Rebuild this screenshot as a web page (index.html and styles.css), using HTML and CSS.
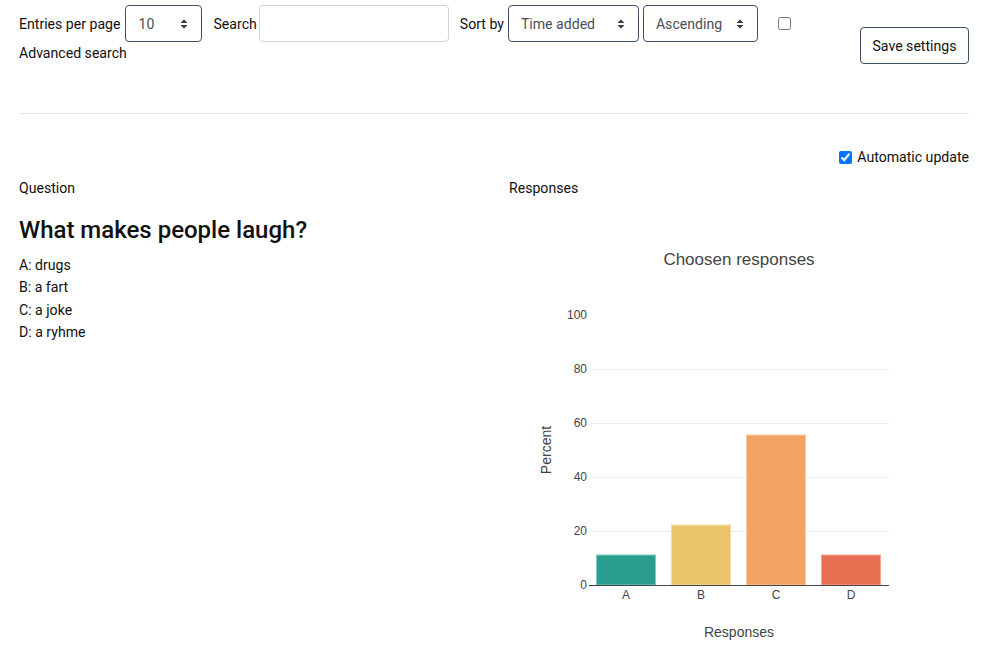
FILE: index.html
```html
<!DOCTYPE html>
<html lang="en">
<head>
<meta charset="utf-8">
<title>Responses</title>
<link rel="stylesheet" href="styles.css">
</head>
<body>
<div class="page">
  <form class="toolbar">
    <div class="controls">
      <label class="field field-entries">Entries per page
        <span class="select select-entries">10<svg class="chev" width="8" height="10" viewBox="0 0 8 10"><path d="M0.5 4 L4 0.5 L7.5 4 Z M0.5 6 L4 9.5 L7.5 6 Z" fill="#343a40"/></svg></span>
      </label>
      <label class="field field-search">Search
        <span class="input-search"></span>
      </label>
      <label class="field">Sort by
        <span class="select select-sort">Time added<svg class="chev" width="8" height="10" viewBox="0 0 8 10"><path d="M0.5 4 L4 0.5 L7.5 4 Z M0.5 6 L4 9.5 L7.5 6 Z" fill="#343a40"/></svg></span>
        <span class="select select-order">Ascending<svg class="chev" width="8" height="10" viewBox="0 0 8 10"><path d="M0.5 4 L4 0.5 L7.5 4 Z M0.5 6 L4 9.5 L7.5 6 Z" fill="#343a40"/></svg></span>
      </label>
      <input type="checkbox" class="check-top" aria-label="Toggle">
      <a class="advanced">Advanced search</a>
    </div>
    <button type="button" class="save">Save settings</button>
  </form>

  <hr class="divider">

  <div class="auto">
    <label class="auto-label"><input type="checkbox" class="check-auto" checked>Automatic update</label>
  </div>

  <div class="cols">
    <section class="col">
      <div class="col-label">Question</div>
      <h2 class="question">What makes people laugh?</h2>
      <ul class="answers">
        <li>A: drugs</li>
        <li>B: a fart</li>
        <li>C: a joke</li>
        <li>D: a ryhme</li>
      </ul>
    </section>
    <section class="col">
      <div class="col-label">Responses</div>
      <div class="chart">
        <svg width="460" height="450" viewBox="0 0 460 450" class="chart-svg">
          <text x="230" y="50" class="chart-title" text-anchor="middle">Choosen responses</text>
          <g class="grid">
            <line x1="80" x2="380" y1="154.5" y2="154.5"/>
            <line x1="80" x2="380" y1="208.5" y2="208.5"/>
            <line x1="80" x2="380" y1="262.5" y2="262.5"/>
            <line x1="80" x2="380" y1="316.5" y2="316.5"/>
          </g>
          <g class="ticks" text-anchor="end">
            <text x="78" y="104">100</text>
            <text x="78" y="158">80</text>
            <text x="78" y="212">60</text>
            <text x="78" y="266">40</text>
            <text x="78" y="320">20</text>
            <text x="78" y="374">0</text>
          </g>
          <rect x="87.5" y="340" width="59" height="30" fill="#2a9d8f" stroke="#7fcdc3" stroke-width="1"/>
          <rect x="162.5" y="310" width="59" height="60" fill="#e9c46a" stroke="#f5dea3" stroke-width="1"/>
          <rect x="237.5" y="220" width="59" height="150" fill="#f4a261" stroke="#f9cda6" stroke-width="1"/>
          <rect x="312.5" y="340" width="59" height="30" fill="#e76f51" stroke="#f2a793" stroke-width="1"/>
          <line x1="80" x2="380" y1="370.5" y2="370.5" class="axis"/>
          <g class="ticks" text-anchor="middle">
            <text x="117" y="384">A</text>
            <text x="192" y="384">B</text>
            <text x="267" y="384">C</text>
            <text x="342" y="384">D</text>
          </g>
          <text x="230" y="422" class="axis-title" text-anchor="middle">Responses</text>
          <text x="0" y="0" class="axis-title" text-anchor="middle" transform="translate(42 235) rotate(-90)">Percent</text>
        </svg>
      </div>
    </section>
  </div>
</div>
</body>
</html>
```

FILE: styles.css
```css
* { box-sizing: border-box; }

html, body {
  margin: 0;
  padding: 0;
  background: #fff;
}

body {
  font-family: Roboto, "Noto Sans", "Liberation Sans", sans-serif;
  font-size: 14.1px;
  color: #111;
}

.page {
  padding: 5px 36px 0 19px;
}

.toolbar {
  display: flex;
  justify-content: space-between;
  align-items: flex-start;
}

.controls {
  display: flex;
  flex-wrap: wrap;
  align-items: center;
}

.field {
  display: flex;
  align-items: center;
  gap: 4px;
  margin-right: 11px;
  line-height: 22px;
}

.field-entries { gap: 5px; }
.field-search { gap: 2px; }

.select {
  display: flex;
  align-items: center;
  justify-content: space-between;
  height: 37px;
  padding: 0 13px 0 12px;
  border: 1px solid #3f5166;
  border-radius: 4px;
  color: #495057;
  background: #fff;
}

.chev { display: block; }

.select-entries { width: 77px; }
.select-sort { width: 131px; }
.select-order { width: 115px; }

.input-search {
  display: block;
  width: 190px;
  height: 37px;
  border: 1px solid #ced4da;
  border-radius: 4px;
}

.check-top {
  width: 13px;
  height: 13px;
  margin: 0 0 0 9px;
  align-self: center;
}

.advanced {
  flex-basis: 100%;
  line-height: 22px;
  color: #111;
}

.save {
  flex-shrink: 0;
  white-space: nowrap;
  margin-top: 22px;
  height: 37px;
  width: 109px;
  padding: 0;
  font: inherit;
  color: #111;
  background: #fff;
  border: 1px solid #3f5166;
  border-radius: 4px;
}

.divider {
  margin: 49px 0 0;
  border: 0;
  border-top: 1px solid #e6e6e6;
}

.auto {
  display: flex;
  justify-content: flex-end;
  margin-top: 32px;
  line-height: 22px;
}

.auto-label {
  display: flex;
  align-items: center;
  gap: 5px;
}

.check-auto {
  width: 13px;
  height: 13px;
  margin: 0;
}

.cols {
  display: grid;
  grid-template-columns: 1fr 1fr;
  column-gap: 30px;
  margin-top: 9px;
}

.col-label {
  line-height: 22px;
}

.question {
  margin: 16px 0 0;
  font-size: 24px;
  font-weight: 500;
  line-height: 30px;
}

.answers {
  list-style: none;
  margin: 9px 0 0;
  padding: 0;
  line-height: 22.4px;
}

.chart {
  margin-top: 16px;
  width: 460px;
  height: 450px;
}

.chart-svg {
  display: block;
  font-family: "Liberation Sans", Arial, sans-serif;
}

.chart-title {
  font-size: 17px;
  fill: #444;
}

.grid line {
  stroke: #eee;
  stroke-width: 1;
}

.axis {
  stroke: #444;
  stroke-width: 1;
}

.ticks text {
  font-size: 12px;
  fill: #444;
}

.axis-title {
  font-size: 14px;
  fill: #444;
}
```
